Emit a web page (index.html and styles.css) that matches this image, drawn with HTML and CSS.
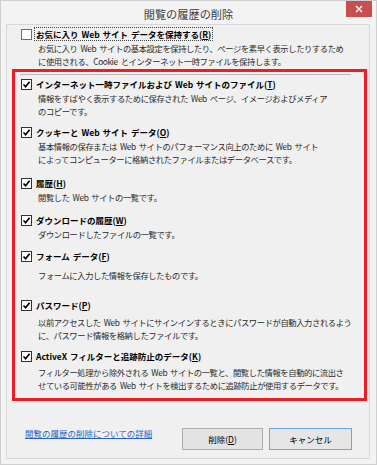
FILE: index.html
```html
<!DOCTYPE html>
<html lang="ja">
<head>
<meta charset="utf-8">
<title>閲覧の履歴の削除</title>
<link rel="stylesheet" href="styles.css">
</head>
<body>
<div class="window">
  <div class="titlebar">
    <span class="title">閲覧の履歴の削除</span>
    <div class="close"><svg width="8" height="8" viewBox="0 0 8 8"><path d="M1 1 L7 7 M7 1 L1 7" stroke="#fff" stroke-width="1.4"/></svg></div>
  </div>
  <div class="panel">
    <div class="item item-first">
      <div class="opt"><span class="cb"></span><span class="lbl lbl-focus">お気に入り Web サイト データを保持する(<u>R</u>)</span></div>
      <p class="desc">お気に入り Web サイトの基本設定を保持したり、ページを素早く表示したりするため<br>に使用される、Cookie とインターネット一時ファイルを保持します。</p>
    </div>
    <div class="highlight">
      <div class="sep"></div>
      <div class="item item-2">
        <div class="opt"><span class="cb cb-on"><svg width="9" height="9" viewBox="0 0 9 9"><path d="M1.5 4.5 L3.6 6.8 L7.6 1.8" fill="none" stroke="#000" stroke-width="1.7"/></svg></span><span class="lbl">インターネット一時ファイルおよび Web サイトのファイル(<u>T</u>)</span></div>
        <p class="desc">情報をすばやく表示するために保存された Web ページ、イメージおよびメディア<br>のコピーです。</p>
      </div>
      <div class="item item-3">
        <div class="opt"><span class="cb cb-on"><svg width="9" height="9" viewBox="0 0 9 9"><path d="M1.5 4.5 L3.6 6.8 L7.6 1.8" fill="none" stroke="#000" stroke-width="1.7"/></svg></span><span class="lbl">クッキーと Web サイト データ(<u>O</u>)</span></div>
        <p class="desc">基本情報の保存または Web サイトのパフォーマンス向上のために Web サイト<br>によってコンピューターに格納されたファイルまたはデータベースです。</p>
      </div>
      <div class="item item-4">
        <div class="opt"><span class="cb cb-on"><svg width="9" height="9" viewBox="0 0 9 9"><path d="M1.5 4.5 L3.6 6.8 L7.6 1.8" fill="none" stroke="#000" stroke-width="1.7"/></svg></span><span class="lbl">履歴(<u>H</u>)</span></div>
        <p class="desc">閲覧した Web サイトの一覧です。</p>
      </div>
      <div class="item item-5">
        <div class="opt"><span class="cb cb-on"><svg width="9" height="9" viewBox="0 0 9 9"><path d="M1.5 4.5 L3.6 6.8 L7.6 1.8" fill="none" stroke="#000" stroke-width="1.7"/></svg></span><span class="lbl">ダウンロードの履歴(<u>W</u>)</span></div>
        <p class="desc">ダウンロードしたファイルの一覧です。</p>
      </div>
      <div class="item item-6">
        <div class="opt"><span class="cb cb-on"><svg width="9" height="9" viewBox="0 0 9 9"><path d="M1.5 4.5 L3.6 6.8 L7.6 1.8" fill="none" stroke="#000" stroke-width="1.7"/></svg></span><span class="lbl">フォーム データ(<u>F</u>)</span></div>
        <p class="desc desc-6">フォームに入力した情報を保存したものです。</p>
      </div>
      <div class="item item-7">
        <div class="opt"><span class="cb cb-on"><svg width="9" height="9" viewBox="0 0 9 9"><path d="M1.5 4.5 L3.6 6.8 L7.6 1.8" fill="none" stroke="#000" stroke-width="1.7"/></svg></span><span class="lbl">パスワード(<u>P</u>)</span></div>
        <p class="desc desc-7">以前アクセスした Web サイトにサインインするときにパスワードが自動入力されるよう<br>に、パスワード情報を格納したファイルです。</p>
      </div>
      <div class="item item-8">
        <div class="opt"><span class="cb cb-on"><svg width="9" height="9" viewBox="0 0 9 9"><path d="M1.5 4.5 L3.6 6.8 L7.6 1.8" fill="none" stroke="#000" stroke-width="1.7"/></svg></span><span class="lbl">ActiveX フィルターと追跡防止のデータ(<u>K</u>)</span></div>
        <p class="desc desc-8">フィルター処理から除外される Web サイトの一覧と、閲覧した情報を自動的に流出さ<br>せている可能性がある Web サイトを検出するために追跡防止が使用するデータです。</p>
      </div>
    </div>
    <div class="footer">
      <a class="link" href="#">閲覧の履歴の削除についての詳細</a>
      <div class="buttons">
        <button class="btn btn-delete">削除(<u>D</u>)</button>
        <button class="btn btn-cancel">キャンセル</button>
      </div>
    </div>
  </div>
</div>
</body>
</html>
```
FILE: styles.css
```css
* { box-sizing: border-box; }
html, body { margin: 0; padding: 0; }
body {
  background: #f2f2f2;
  font-family: "Noto Sans CJK JP", "Noto Sans", sans-serif;
  color: #000;
}
.window {
  width: 377px;
  height: 465px;
  background: #f3f3f3;
  border: 1px solid #cfcfcf;
  display: flex;
  flex-direction: column;
  position: relative;
}
.titlebar {
  height: 23px;
  display: flex;
  align-items: center;
  justify-content: center;
}
.title {
  font-size: 11.2px;
  line-height: 14px;
  color: #3c3c3c;
  margin-top: 2px;
}
.close {
  position: absolute;
  top: 0;
  left: 345px;
  width: 26px;
  height: 16px;
  background: #c94f4f;
  display: flex;
  align-items: center;
  justify-content: center;
}
.close svg { display: block; }
.panel {
  margin-left: 5px;
  width: 364px;
  height: 435px;
  border: 1px solid #d8d8d8;
  background: #f0f0f0;
  display: flex;
  flex-direction: column;
}
.item { display: flex; flex-direction: column; }
.item-first { margin-top: 2px; padding-left: 14px; }
.opt {
  display: flex;
  align-items: center;
  height: 14px;
}
.cb {
  width: 11px;
  height: 11px;
  border: 1px solid #333;
  background: #fff;
  display: flex;
  align-items: center;
  justify-content: center;
  flex: none;
}
.item-first .cb { border-color: #6d6d6d; }
.cb svg { display: block; }
.lbl {
  margin-left: 2px;
  font-size: 8.5px;
  font-weight: bold;
  line-height: 12px;
  padding: 0 1px;
  border: 1px solid transparent;
  white-space: nowrap;
  word-spacing: 1px;
}
.lbl-focus { border: 1px dotted #444; }
.lbl u, .btn u { text-decoration: underline; }
.desc {
  margin: 1px 0 0 17px;
  font-size: 8.3px;
  letter-spacing: -0.4px;
  word-spacing: 1.5px;
  line-height: 13px;
  color: #2a2a2a;
  white-space: nowrap;
}
.highlight {
  margin: 1px 2px 0 5px;
  width: 355px;
  border: 3px solid #ee1c25;
  padding: 2px 0 6px 6px;
}
.sep {
  margin-left: -1px;
  width: 331px;
  height: 1px;
  background: #b9b9b9;
}
.item-2 { margin-top: 2px; }
.item-3 { margin-top: 7px; }
.item-4 { margin-top: 10px; }
.item-5 { margin-top: 9px; }
.item-6 { margin-top: 8px; }
.desc-6 { margin-top: 6px; }
.item-7 { margin-top: 16px; }
.desc-7 { margin-top: 4px; }
.item-8 { margin-top: 7px; }
.desc-8 { margin-top: 3px; }
.footer {
  margin-top: 27px;
  padding: 0 17px 0 18px;
  display: flex;
  justify-content: space-between;
  align-items: flex-start;
}
.link {
  font-size: 8.5px;
  line-height: 11px;
  color: #2a62c4;
  text-decoration: underline;
  white-space: nowrap;
}
.buttons { display: flex; gap: 6px; }
.btn {
  height: 22px;
  font-family: "Noto Sans CJK JP", "Noto Sans", sans-serif;
  font-size: 8.5px;
  line-height: 12px;
  color: #000;
  background: #e3e3e3;
  border: 1px solid #adadad;
  padding: 0;
  margin: 0;
}
.btn-delete { width: 81px; }
.btn-cancel { width: 83px; border-color: #6fa6e0; background: #e6e6e6; }
```
